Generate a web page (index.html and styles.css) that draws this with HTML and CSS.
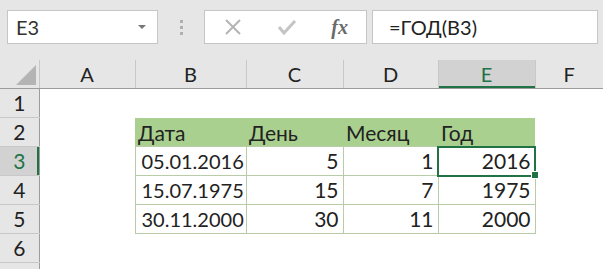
FILE: index.html
```html
<!DOCTYPE html>
<html lang="ru">
<head>
  <meta charset="UTF-8" />
  <title>ГОД</title>
  <link rel="stylesheet" href="styles.css">
</head>
<body>
  <div class="toolbar">
    <div class="namebox">
      <span>E3</span>
      <span class="arrow"></span>
    </div>
    <div class="grip"><i></i><i></i><i></i></div>
    <div class="fxbox">
      <svg width="18" height="18" viewBox="0 0 18 18"><path d="M2 2 L16 16 M16 2 L2 16" stroke="#b4b4b4" stroke-width="2" fill="none"/></svg>
      <svg width="20" height="18" viewBox="0 0 20 18"><path d="M2 9 L7 15 L18 3" stroke="#c4c4c4" stroke-width="3" fill="none"/></svg>
      <span class="fx">fx</span>
    </div>
    <div class="formula">=ГОД(B3)</div>
  </div>

  <table class="sheet">
    <colgroup>
      <col class="c-row"><col class="c-a"><col class="c-b"><col class="c-c"><col class="c-d"><col class="c-e"><col>
    </colgroup>
    <thead>
      <tr>
        <th class="corner"><span class="tri"></span></th>
        <th>A</th><th>B</th><th>C</th><th>D</th><th class="sel">E</th><th class="last">F</th>
      </tr>
    </thead>
    <tbody>
      <tr><th>1</th><td></td><td></td><td></td><td></td><td></td><td></td></tr>
      <tr><th>2</th><td></td>
        <td class="hd">Дата</td><td class="hd">День</td><td class="hd">Месяц</td><td class="hd">Год</td><td></td></tr>
      <tr><th class="sel">3</th><td></td>
        <td class="d date">05.01.2016</td><td class="d num">5</td><td class="d num">1</td><td class="d num active">2016<span class="handle"></span></td><td></td></tr>
      <tr><th>4</th><td></td>
        <td class="d date">15.07.1975</td><td class="d num">15</td><td class="d num">7</td><td class="d num">1975</td><td></td></tr>
      <tr><th>5</th><td></td>
        <td class="d date">30.11.2000</td><td class="d num">30</td><td class="d num">11</td><td class="d num">2000</td><td></td></tr>
      <tr><th>6</th><td></td><td></td><td></td><td></td><td></td><td></td></tr>
      <tr><th></th><td></td><td></td><td></td><td></td><td></td><td></td></tr>
    </tbody>
  </table>
</body>
</html>
```

FILE: styles.css
```css
body {
  margin: 0;
  width: 603px;
  height: 269px;
  overflow: hidden;
  background: #fff;
  font-family: Lato, "Open Sans", sans-serif;
  color: #222;
}
.toolbar {
  display: flex;
  align-items: center;
  height: 60px;
  padding: 0 5px 6px 7px;
  box-sizing: border-box;
  background: #e6e6e6;
}
.namebox, .fxbox, .formula {
  height: 34px;
  box-sizing: border-box;
  background: #fff;
  border: 1px solid #c6c6c6;
  display: flex;
  align-items: center;
}
.namebox {
  width: 151px;
  padding: 0 11px 0 8px;
  justify-content: space-between;
  font-size: 20px;
  color: #333;
}
.arrow {
  width: 0;
  height: 0;
  border-left: 4px solid transparent;
  border-right: 4px solid transparent;
  border-top: 4px solid #777;
}
.grip {
  width: 46px;
  display: flex;
  flex-direction: column;
  align-items: center;
  gap: 3px;
}
.grip i {
  width: 3px;
  height: 3px;
  background: #b0b0b0;
}
.fxbox {
  width: 163px;
  padding: 0 18px 0 19px;
  justify-content: space-between;
}
.fx {
  font-family: "Liberation Serif", serif;
  font-style: italic;
  font-weight: bold;
  font-size: 20px;
  color: #6a6a6a;
}
.formula {
  flex: 1;
  margin-left: 5px;
  padding-left: 16px;
  font-size: 20px;
  color: #222;
}
.sheet {
  border-collapse: collapse;
  table-layout: fixed;
  width: 603px;
}
.c-row { width: 39px; }
.c-a { width: 96px; }
.c-b { width: 111px; }
.c-c { width: 97px; }
.c-d { width: 95px; }
.c-e { width: 97px; }
.sheet th, .sheet td {
  padding: 0;
  height: 28px;
  font-size: 21px;
  font-weight: normal;
  line-height: 28px;
  white-space: nowrap;
  overflow: visible;
}
.sheet thead th {
  background: #e6e6e6;
  height: 27px;
  border-right: 1px solid #c8c8c8;
  border-bottom: 1px solid #9c9c9c;
  color: #222;
  font-size: 20px;
}
.sheet thead th.last { border-right: none; }
.sheet thead th.sel {
  background: #d2d2d2;
  color: #217346;
  box-shadow: inset 0 -2px 0 #217346;
}
.corner { position: relative; }
.tri {
  position: absolute;
  right: 3px;
  bottom: 3px;
  width: 0;
  height: 0;
  border-left: 20px solid transparent;
  border-bottom: 20px solid #b4b4b4;
}
.sheet tbody th {
  background: #e6e6e6;
  border-right: 1px solid #9c9c9c;
  border-bottom: 1px solid #c8c8c8;
  color: #222;
}
.sheet tbody th.sel {
  background: #d2d2d2;
  color: #217346;
  box-shadow: inset -2px 0 0 #217346;
}
.hd {
  background: #a9d08e;
  padding-left: 3px !important;
  vertical-align: bottom;
  line-height: 26px !important;
}
.d {
  border: 1px solid #b8cca8;
  padding: 0 4px !important;
}
.sheet td.date {
  padding-left: 6px !important;
  font-size: 20px;
}
.num { text-align: right; }
.active {
  position: relative;
  outline: 2px solid #217346;
  outline-offset: -1px;
}
.handle {
  position: absolute;
  right: -4px;
  bottom: -4px;
  width: 6px;
  height: 6px;
  background: #217346;
  border: 1px solid #fff;
}
```
